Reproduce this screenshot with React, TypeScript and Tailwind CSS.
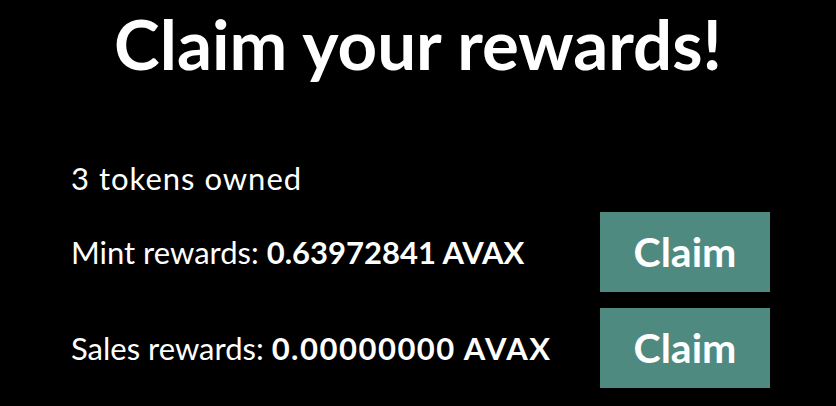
import React from "react";

export default function App() {
  return (
    <div
      className="w-[836px] h-[406px] bg-black text-white overflow-hidden"
      style={{ fontFamily: "Lato, 'Open Sans', sans-serif" }}
    >
      <h1 className="text-center text-[69px] font-bold leading-none pt-[9px]">
        Claim your rewards!
      </h1>
      <div className="pl-[71px] pr-[66px] mt-[80px] flex flex-col">
        <div className="text-[31px] leading-none h-[40px] flex items-center tracking-[1px]">3 tokens owned</div>
        <div className="flex items-center justify-between mt-[14px]">
          <div className="text-[31px]">
            Mint rewards: <span className="font-bold">0.63972841 AVAX</span>
          </div>
          <button className="w-[170px] h-[80px] bg-[#4f8a80] text-[41px] font-bold">Claim</button>
        </div>
        <div className="flex items-center justify-between mt-[16px]">
          <div className="text-[31px]">
            Sales rewards: <span className="font-bold tracking-[1.5px]">0.00000000 AVAX</span>
          </div>
          <button className="w-[170px] h-[80px] bg-[#4f8a80] text-[41px] font-bold">Claim</button>
        </div>
      </div>
    </div>
  );
}
